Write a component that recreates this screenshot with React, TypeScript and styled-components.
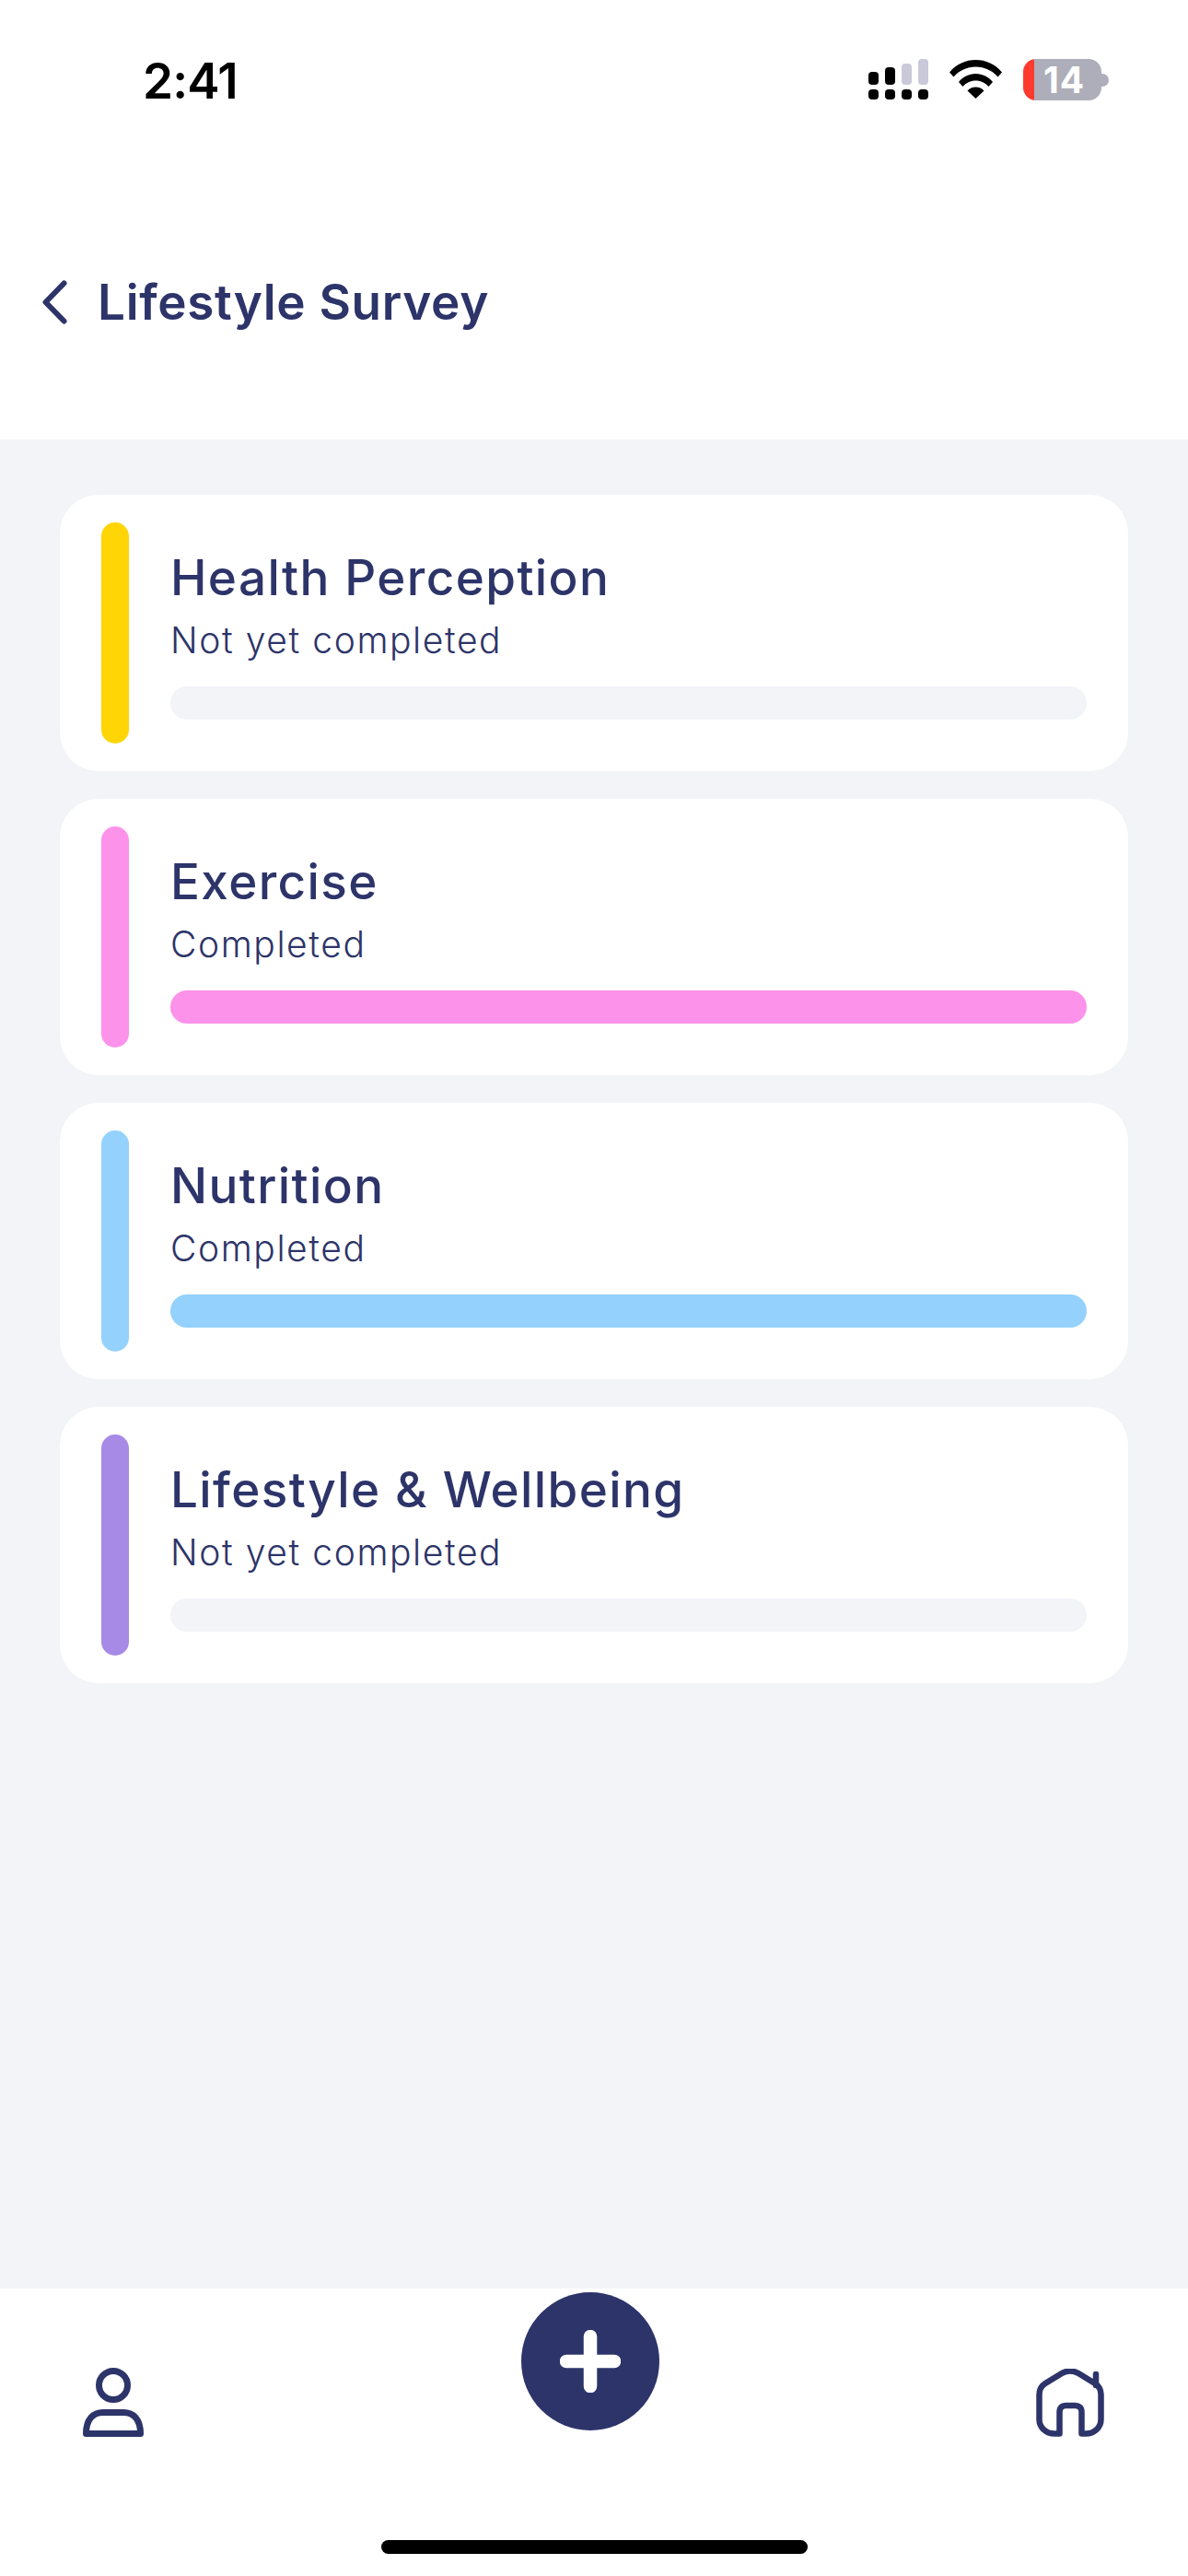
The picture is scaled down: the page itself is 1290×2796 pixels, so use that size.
import React from "react";
import styled, { createGlobalStyle } from "styled-components";

const navy = "#2d3469";
const mist = "#f3f4f8";

const GlobalStyle = createGlobalStyle`
  html, body {
    margin: 0;
    padding: 0;
    background: #fff;
  }
  * {
    box-sizing: border-box;
  }
`;

const Page = styled.div`
  width: 1290px;
  height: 2796px;
  display: flex;
  flex-direction: column;
  background: ${mist};
  font-family: Inter, "Liberation Sans", sans-serif;
  overflow: hidden;
`;

const Top = styled.header`
  height: 477px;
  background: #fff;
  display: flex;
  flex-direction: column;
`;

const StatusBar = styled.div`
  height: 130px;
  padding: 59px 86px 0 155px;
  display: flex;
  align-items: flex-start;
  justify-content: space-between;
`;

const Time = styled.span`
  font-size: 53px;
  line-height: 58px;
  font-weight: 600;
  color: #000;
  letter-spacing: -0.8px;
`;

const StatusIcons = styled.div`
  margin-top: 5px;
  display: flex;
  align-items: flex-start;
  gap: 23px;
`;

const TitleRow = styled.div`
  margin-top: 173px;
  padding-left: 46px;
  display: flex;
  align-items: center;
  gap: 33px;
  height: 50px;
`;

const Title = styled.h1`
  margin: 0;
  font-size: 53px;
  line-height: 50px;
  font-weight: 600;
  letter-spacing: 0.7px;
  color: ${navy};
`;

const List = styled.main`
  flex: 1;
  padding: 60px 65px 0;
  display: flex;
  flex-direction: column;
  gap: 30px;
`;

const Card = styled.section`
  height: 300px;
  padding: 30px 45px;
  background: #fff;
  border-radius: 42px;
  display: flex;
  gap: 45px;
`;

const Accent = styled.div<{ $color: string }>`
  width: 30px;
  height: 240px;
  flex: none;
  border-radius: 15px;
  background: ${(p) => p.$color};
`;

const CardBody = styled.div`
  flex: 1;
  padding-top: 30px;
`;

const CardTitle = styled.div`
  font-size: 53px;
  line-height: 60px;
  font-weight: 500;
  letter-spacing: 1.4px;
  color: ${navy};
`;

const CardStatus = styled.div`
  margin-top: 13px;
  font-size: 39px;
  line-height: 50px;
  font-weight: 350;
  letter-spacing: 1.6px;
  color: ${navy};
`;

const Track = styled.div<{ $fill?: string }>`
  margin-top: 25px;
  height: 36px;
  border-radius: 18px;
  background: ${(p) => p.$fill || mist};
`;

const Nav = styled.nav`
  height: 312px;
  padding-top: 4px;
  background: #fff;
  display: flex;
  flex-direction: column;
  align-items: center;
`;

const NavRow = styled.div`
  align-self: stretch;
  height: 161px;
  padding: 0 91px 0 90px;
  display: flex;
  align-items: flex-start;
  justify-content: space-between;
`;

const NavIcon = styled.svg<{ $top: number }>`
  margin-top: ${(p) => p.$top}px;
  display: block;
`;

const AddButton = styled.button`
  width: 150px;
  height: 150px;
  padding: 0;
  border: 0;
  border-radius: 50%;
  background: ${navy};
  display: flex;
  align-items: center;
  justify-content: center;
`;

const HomeIndicator = styled.div`
  margin-top: 108px;
  width: 463px;
  height: 15px;
  border-radius: 8px;
  background: #000;
`;

const Battery = styled.div`
  width: 93px;
  height: 45px;
  display: flex;
  align-items: center;
`;

const BatteryBody = styled.div`
  width: 85px;
  height: 45px;
  border-radius: 14px;
  background: linear-gradient(to right, #ff3b30 12px, #adaeb9 12px);
  color: #fff;
  font-size: 39px;
  line-height: 45px;
  font-weight: 700;
  letter-spacing: 1px;
  text-align: center;
  padding-left: 4px;
`;

const BatteryNub = styled.div`
  width: 8px;
  height: 14px;
  border-radius: 0 7px 7px 0;
  background: #adaeb9;
`;

const CellSignal = () => (
  <svg width="65" height="45" viewBox="0 0 65 45">
    <rect x="0" y="14" width="11" height="14" rx="4" fill="#000" />
    <rect x="18" y="9" width="11" height="19" rx="4" fill="#000" />
    <rect x="36" y="5" width="11" height="23" rx="4" fill="#c9c9da" />
    <rect x="54" y="0" width="11" height="28" rx="4" fill="#c9c9da" />
    <rect x="0" y="33" width="11" height="11" rx="4" fill="#000" />
    <rect x="18" y="33" width="11" height="11" rx="4" fill="#000" />
    <rect x="36" y="33" width="11" height="11" rx="4" fill="#000" />
    <rect x="54" y="33" width="11" height="11" rx="4" fill="#000" />
  </svg>
);

const Wifi = () => (
  <svg width="57" height="43" viewBox="0 0 57 43">
    <path d="M0 14.5C7.5 5.5 17.5 1 28.5 1S49.5 5.500 57 14.500L52.500 19.500C46.500 12.500 38 8.500 28.500 8.500S10.500 12.500 4.500 19.500Z" fill="#000" />
    <path d="M10 25C14.500 19.500 21 16 28.500 16S42.500 19.500 47 25L42.500 30C39 26 34 23.500 28.500 23.500S18 26 14.500 30Z" fill="#000" />
    <path d="M19.500 34.500C21.800 32 25 30.500 28.500 30.500S35.200 32 37.500 34.500L28.500 43Z" fill="#000" />
  </svg>
);

const BackChevron = () => (
  <svg width="27" height="48" viewBox="0 0 27 48">
    <path d="M23.500 3.500L3.500 24L23.500 44.500" fill="none" stroke={navy} strokeWidth="6" strokeLinecap="round" strokeLinejoin="round" />
  </svg>
);

const PersonIcon = () => (
  <NavIcon $top={82} width="66" height="76" viewBox="0 0 66 76">
    <circle cx="33" cy="19" r="15.500" fill="none" stroke={navy} strokeWidth="7" />
    <path d="M3.500 71.500C3.500 56 11 48 23 48.500H43C55 48 62.500 56 62.500 71.500Z" fill="none" stroke={navy} strokeWidth="7" strokeLinejoin="round" />
  </NavIcon>
);

const PlusIcon = () => (
  <svg width="66" height="68" viewBox="0 0 66 68">
    <path d="M33 7V61M7 34H59" fill="none" stroke="#fff" strokeWidth="14.500" strokeLinecap="round" />
  </svg>
);

const HomeIcon = () => (
  <NavIcon $top={83} width="74" height="76" viewBox="0 0 74 76">
    <path d="M25.500 70.500H20C11 70.500 3.500 64 3.500 55V28C3.500 22.500 6 18.500 10 16L28 5C33.500 1.800 40.500 1.800 46 5L64 16C68 18.500 70.500 22.500 70.500 28V55C70.500 64 63 70.500 54 70.500H49.500V47C49.500 42.500 47 40 42.500 40H32.500C28 40 25.500 42.500 25.500 47Z" fill="none" stroke={navy} strokeWidth="6.500" strokeLinejoin="round" strokeLinecap="round" />
    <path d="M65 18V6" fill="none" stroke={navy} strokeWidth="6.500" strokeLinecap="round" />
  </NavIcon>
);

const sections = [
  { name: "Health Perception", status: "Not yet completed", color: "#ffd506", done: false },
  { name: "Exercise", status: "Completed", color: "#fd92ea", done: true },
  { name: "Nutrition", status: "Completed", color: "#94d1fd", done: true },
  { name: "Lifestyle & Wellbeing", status: "Not yet completed", color: "#a68ae6", done: false },
];

export default function App() {
  return (
    <Page>
      <GlobalStyle />
      <Top>
        <StatusBar>
          <Time>2:41</Time>
          <StatusIcons>
            <CellSignal />
            <Wifi />
            <Battery>
              <BatteryBody>14</BatteryBody>
              <BatteryNub />
            </Battery>
          </StatusIcons>
        </StatusBar>
        <TitleRow>
          <BackChevron />
          <Title>Lifestyle Survey</Title>
        </TitleRow>
      </Top>
      <List>
        {sections.map((s) => (
          <Card key={s.name}>
            <Accent $color={s.color} />
            <CardBody>
              <CardTitle>{s.name}</CardTitle>
              <CardStatus>{s.status}</CardStatus>
              <Track $fill={s.done ? s.color : undefined} />
            </CardBody>
          </Card>
        ))}
      </List>
      <Nav>
        <NavRow>
          <PersonIcon />
          <AddButton aria-label="Add">
            <PlusIcon />
          </AddButton>
          <HomeIcon />
        </NavRow>
        <HomeIndicator />
      </Nav>
    </Page>
  );
}
